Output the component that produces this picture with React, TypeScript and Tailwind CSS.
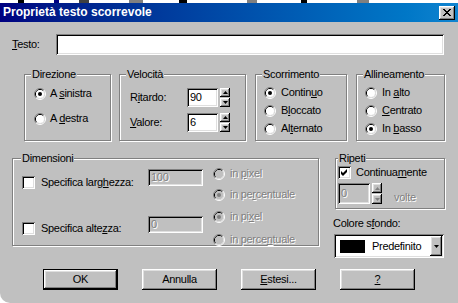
import React from "react";

const sunken =
  "shadow-[inset_1px_1px_0_#808080,inset_-1px_-1px_0_#fff,inset_2px_2px_0_#000,inset_-2px_-2px_0_#dfdfdf]";
const raised =
  "shadow-[inset_-1px_-1px_0_#000,inset_1px_1px_0_#fff,inset_-2px_-2px_0_#808080,inset_2px_2px_0_#dfdfdf]";
const grayText = "text-[#808080] [text-shadow:1px_1px_0_#fff]";

function Radio({ checked = false, disabled = false }: { checked?: boolean; disabled?: boolean }) {
  return (
    <svg width="12" height="12" viewBox="0 0 12 12" className="shrink-0">
      <path d="M2.11 9.89 A5.5 5.5 0 0 1 9.89 2.11" fill="none" stroke="#808080" />
      <path d="M9.89 2.11 A5.5 5.5 0 0 1 2.11 9.89" fill="none" stroke="#fff" />
      <path d="M2.82 9.18 A4.5 4.5 0 0 1 9.18 2.82" fill="none" stroke="#000" />
      <path d="M9.18 2.82 A4.5 4.5 0 0 1 2.82 9.18" fill="none" stroke="#dfdfdf" />
      <circle cx="6" cy="6" r="4" fill={disabled ? "#c0c0c0" : "#fff"} />
      {checked && <circle cx="6" cy="6" r="2" fill={disabled ? "#808080" : "#000"} />}
    </svg>
  );
}

function RadioRow({
  label,
  checked,
  disabled,
  gap,
}: {
  label: React.ReactNode;
  checked?: boolean;
  disabled?: boolean;
  gap: string;
}) {
  return (
    <div className={`flex items-center h-[13px] ${gap}`}>
      <Radio checked={checked} disabled={disabled} />
      <span className={`whitespace-nowrap ${disabled ? grayText : ""}`}>{label}</span>
    </div>
  );
}

function Checkbox({ checked = false }: { checked?: boolean }) {
  return (
    <div className={`w-[13px] h-[13px] shrink-0 bg-white flex items-center justify-center ${sunken}`}>
      {checked && (
        <svg width="7" height="7" viewBox="0 0 7 7">
          <path d="M0 2 L2 4 L6 0 L6 3 L2 7 L0 5 Z" fill="#000" />
        </svg>
      )}
    </div>
  );
}

function Spin({ disabled = false, h }: { disabled?: boolean; h: string }) {
  const fill = disabled ? "#808080" : "#000";
  return (
    <div className={`flex flex-col gap-[1px] w-[10px] ${h}`}>
      <div className={`flex-1 bg-[#c0c0c0] flex items-center justify-center ${raised}`}>
        <svg width="5" height="3" viewBox="0 0 5 3">
          <path d="M2.5 0 L5 3 L0 3 Z" fill={fill} />
        </svg>
      </div>
      <div className={`flex-1 bg-[#c0c0c0] flex items-center justify-center ${raised}`}>
        <svg width="5" height="3" viewBox="0 0 5 3">
          <path d="M0 0 L5 0 L2.5 3 Z" fill={fill} />
        </svg>
      </div>
    </div>
  );
}

function Group({
  title,
  className,
  legendClass,
  children,
}: {
  title: React.ReactNode;
  className: string;
  legendClass: string;
  children: React.ReactNode;
}) {
  return (
    <fieldset
      className={`shrink-0 border border-[#808080] shadow-[inset_1px_1px_0_#fff,1px_1px_0_#fff] ${className}`}
    >
      <legend className={`px-[1px] bg-[#c0c0c0] ${legendClass}`}>{title}</legend>
      {children}
    </fieldset>
  );
}

function DialogButton({ children, isDefault = false }: { children: React.ReactNode; isDefault?: boolean }) {
  return (
    <div className={`w-[75px] h-[21px] ${isDefault ? "border border-black" : ""}`}>
      <div className={`w-full h-full bg-[#c0c0c0] flex items-center justify-center ${raised}`}>
        {children}
      </div>
    </div>
  );
}

export default function App() {
  return (
    <div className="w-[458px] h-[303px] bg-white overflow-hidden font-['Liberation_Sans',Arial,sans-serif] text-[11px] leading-[13px] tracking-[-0.3px] text-black select-none">
      {/* bit of the screen behind the dialog */}
      <div className="flex h-[3px] bg-white">
        <div className="ml-[18px] w-[6px] bg-black" />
        <div className="ml-[30px] w-[5px] bg-[#000080]" />
        <div className="ml-[20px] w-[10px] bg-[#404040]" />
        <div className="ml-[40px] w-[14px] bg-[#808080]" />
        <div className="ml-[36px] w-[8px] bg-black" />
        <div className="ml-[60px] w-[10px] bg-[#808080]" />
        <div className="ml-[44px] w-[6px] bg-black" />
        <div className="ml-[50px] w-[12px] bg-[#808080]" />
      </div>

      <div className="flex flex-col h-[300px] bg-[#c0c0c0] rounded-bl-[10px]">
        {/* title bar */}
        <div className="flex items-center justify-between h-[19px] pl-[3px] pr-[3px] bg-linear-to-r from-[#000080] to-[#1084d0]">
          <span className="text-white font-bold text-[12px] tracking-normal whitespace-nowrap">
            Proprietà testo scorrevole
          </span>
          <div className={`w-[16px] h-[14px] bg-[#c0c0c0] flex items-center justify-center ${raised}`}>
            <svg width="8" height="7" viewBox="0 0 8 7">
              <path
                d="M0 0h2v1h1v1h2V1h1V0h2v1H7v1H6v1H5v1h1v1h1v1h1v1H6V6H5V5H3v1H2v1H0V6h1V5h1V4h1V3H2V2H1V1H0Z"
                fill="#000"
              />
            </svg>
          </div>
        </div>

        {/* Testo */}
        <div className="flex items-center mt-[12px] pl-[12px]">
          <span className="w-[44px]">
            <u>T</u>esto:
          </span>
          <div className={`w-[388px] h-[21px] bg-white ${sunken}`} />
        </div>

        {/* first row of groups */}
        <div className="flex items-start mt-[13px] pl-[24px]">
          <Group title="Direzione" className="w-[87px] h-[73px]" legendClass="ml-[6px]">
            <div className="flex flex-col gap-[12px] mt-[6px] pl-[9px]">
              <RadioRow checked gap="gap-[4px]" label={<>A <u>s</u>inistra</>} />
              <RadioRow gap="gap-[4px]" label={<>A <u>d</u>estra</>} />
            </div>
          </Group>

          <Group title="Velocità" className="ml-[8px] w-[127px] h-[73px]" legendClass="ml-[6px]">
            <div className="flex flex-col gap-[6px] mt-[7px] pl-[10px]">
              <div className="flex items-center">
                <span className="w-[57px]">
                  R<u>i</u>tardo:
                </span>
                <div className={`w-[31px] h-[19px] bg-white pl-[3px] flex items-center ${sunken}`}>90</div>
                <div className="ml-[2px]">
                  <Spin h="h-[19px]" />
                </div>
              </div>
              <div className="flex items-center">
                <span className="w-[57px]">
                  <u>V</u>alore:
                </span>
                <div className={`w-[31px] h-[19px] bg-white pl-[3px] flex items-center ${sunken}`}>6</div>
                <div className="ml-[2px]">
                  <Spin h="h-[19px]" />
                </div>
              </div>
            </div>
          </Group>

          <Group title="Scorrimento" className="ml-[9px] w-[92px] h-[73px]" legendClass="ml-[6px]">
            <div className="flex flex-col gap-[5px] mt-[5px] pl-[8px]">
              <RadioRow checked gap="gap-[5px]" label={<>Contin<u>u</u>o</>} />
              <RadioRow gap="gap-[5px]" label={<>B<u>l</u>occato</>} />
              <RadioRow gap="gap-[5px]" label={<>Al<u>t</u>ernato</>} />
            </div>
          </Group>

          <Group title="Allineamento" className="ml-[9px] w-[89px] h-[73px]" legendClass="ml-[6px]">
            <div className="flex flex-col gap-[5px] mt-[5px] pl-[8px]">
              <RadioRow gap="gap-[5px]" label={<>In <u>a</u>lto</>} />
              <RadioRow gap="gap-[5px]" label={<><u>C</u>entrato</>} />
              <RadioRow checked gap="gap-[5px]" label={<>In <u>b</u>asso</>} />
            </div>
          </Group>
        </div>

        {/* second row */}
        <div className="flex items-start mt-[11px] pl-[12px]">
          <Group title="Dimensioni" className="w-[307px] h-[94px]" legendClass="ml-[8px]">
            <div className="flex flex-col mt-[2px] pl-[9px]">
              <div className="flex items-start">
                <div className="flex items-center gap-[6px] w-[126px] mt-[9px]">
                  <Checkbox />
                  <span className="whitespace-nowrap">
                    Specifica larg<u>h</u>ezza:
                  </span>
                </div>
                <div className={`mt-[2px] w-[55px] h-[17px] bg-[#c0c0c0] pl-[3px] flex items-center ${sunken} ${grayText}`}>
                  100
                </div>
                <div className="flex flex-col gap-[8px] ml-[10px]">
                  <RadioRow disabled gap="gap-[5px]" label={<>in <u>p</u>ixel</>} />
                  <RadioRow disabled checked gap="gap-[5px]" label={<>in pe<u>r</u>centuale</>} />
                </div>
              </div>
              <div className="flex items-start mt-[9px]">
                <div className="flex items-center gap-[6px] w-[126px] mt-[12px]">
                  <Checkbox />
                  <span className="whitespace-nowrap">
                    Specifica alte<u>z</u>za:
                  </span>
                </div>
                <div className={`mt-[6px] w-[55px] h-[17px] bg-[#c0c0c0] pl-[3px] flex items-center ${sunken} ${grayText}`}>
                  0
                </div>
                <div className="flex flex-col gap-[10px] ml-[10px]">
                  <RadioRow disabled checked gap="gap-[5px]" label={<>in pi<u>x</u>el</>} />
                  <RadioRow disabled gap="gap-[5px]" label={<>in perce<u>n</u>tuale</>} />
                </div>
              </div>
            </div>
          </Group>

          <div className="flex flex-col ml-[14px]">
            <Group title="Ripeti" className="ml-[2px] w-[110px] h-[57px]" legendClass="ml-[2px]">
              <div className="flex flex-col mt-[1px] pl-[2px]">
                <div className="flex items-center gap-[5px] h-[13px]">
                  <Checkbox checked />
                  <span>
                    Continua<u>m</u>ente
                  </span>
                </div>
                <div className="flex items-start mt-[4px]">
                  <div className={`w-[32px] h-[21px] bg-[#c0c0c0] pl-[3px] flex items-center ${sunken} ${grayText}`}>
                    0
                  </div>
                  <div className="ml-[2px]">
                    <Spin disabled h="h-[21px]" />
                  </div>
                  <span className={`ml-[12px] mt-[8px] ${grayText}`}>volte</span>
                </div>
              </div>
            </Group>
            <span className="mt-[8px]">
              Colore s<u>f</u>ondo:
            </span>
            <div className={`ml-[1px] mt-[4px] w-[110px] h-[24px] bg-white flex items-center ${sunken}`}>
              <div className="ml-[6px] w-[25px] h-[13px] bg-black" />
              <span className="ml-[7px]">Predefinito</span>
              <div className={`ml-auto mr-[2px] w-[12px] h-[20px] bg-[#c0c0c0] flex items-center justify-center ${raised}`}>
                <svg width="5" height="3" viewBox="0 0 5 3">
                  <path d="M0 0 L5 0 L2.5 3 Z" fill="#000" />
                </svg>
              </div>
            </div>
          </div>
        </div>

        {/* buttons */}
        <div className="flex gap-[24px] mt-[11px] pl-[43px]">
          <DialogButton isDefault>OK</DialogButton>
          <DialogButton>Annulla</DialogButton>
          <DialogButton>
            <span>
              <u>E</u>stesi...
            </span>
          </DialogButton>
          <DialogButton>
            <u>?</u>
          </DialogButton>
        </div>
      </div>
    </div>
  );
}
